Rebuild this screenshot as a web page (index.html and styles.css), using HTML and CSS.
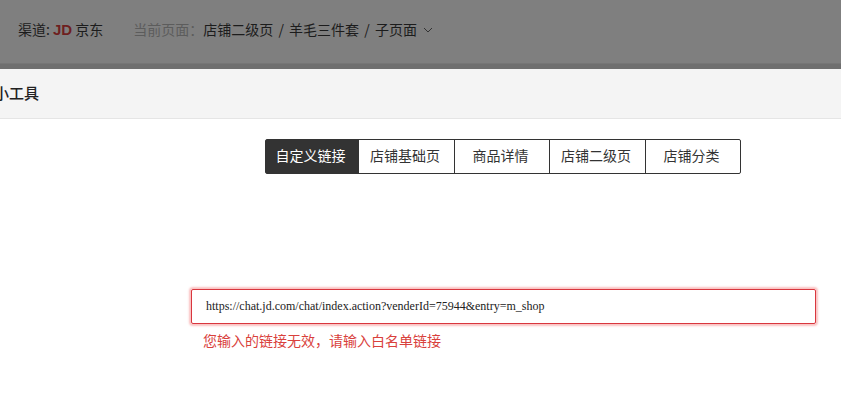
FILE: index.html
```html
<!DOCTYPE html>
<html lang="zh-CN">
<head>
    <meta charset="UTF-8">
    <title>小工具</title>
    <link rel="stylesheet" href="styles.css">
</head>
<body>
    <div class="topbar">
        <span class="channel">渠道: <b class="jd">JD</b> 京东</span>
        <span class="crumbs">
            <span class="crumbs-label">当前页面：</span>店铺二级页 / 羊毛三件套 / 子页面
            <svg class="chevron" width="10" height="6" viewBox="0 0 10 6"><path d="M1 1l4 4 4-4" fill="none" stroke="#333" stroke-width="1"/></svg>
        </span>
    </div>
    <div class="modal">
        <div class="modal-head">小工具</div>
        <div class="tabs">
            <div class="tab tab-active tab-1">自定义链接</div>
            <div class="tab tab-2">店铺基础页</div>
            <div class="tab tab-3">商品详情</div>
            <div class="tab tab-4">店铺二级页</div>
            <div class="tab tab-5">店铺分类</div>
        </div>
        <div class="link-form">
            <div class="link-input">https://chat.jd.com/chat/index.action?venderId=75944&amp;entry=m_shop</div>
            <div class="link-error">您输入的链接无效，请输入白名单链接</div>
        </div>
    </div>
</body>
</html>
```

FILE: styles.css
```css
html, body {
    margin: 0;
    padding: 0;
    height: 100%;
    overflow: hidden;
    background: #fff;
    font-family: "Noto Sans CJK SC", "Liberation Sans", sans-serif;
    color: #333;
}

/* dimmed page behind the dialog */
.topbar {
    display: flex;
    align-items: center;
    height: 64px;
    padding: 0 0 5px 18px;
    box-sizing: border-box;
    background: #7f7f7f;
    border-bottom: 1px solid #767676;
    box-shadow: 0 5px 0 #6f6f6f;
    margin-bottom: 5px;
    font-size: 14px;
    font-weight: 400;
    color: #1c1c1c;
}

.channel {
    margin-right: 30px;
}

.jd {
    color: #6e1f1f;
    font-family: "Liberation Sans", sans-serif;
    font-size: 15px;
}

.crumbs {
    font-size: 14px;
    word-spacing: 2px;
}

.crumbs-label {
    color: #5c5c5c;
}

.chevron {
    margin-left: 1px;
    vertical-align: 2px;
}

.modal-head {
    height: 49px;
    line-height: 47px;
    margin-left: -6px;
    background: #f4f4f4;
    border-bottom: 1px solid #e5e5e5;
    font-size: 15px;
    font-weight: 500;
    color: #222;
}

.tabs {
    display: flex;
    margin: 20px 0 0 265px;
    width: 476px;
    height: 35px;
    box-sizing: border-box;
    border: 1px solid #333;
    border-radius: 2px;
}

.tab {
    display: flex;
    align-items: center;
    justify-content: center;
    box-sizing: border-box;
    padding: 0 3px 4px 0;
    border-left: 1px solid #333;
    font-size: 14px;
    color: #333;
}

.tab-active {
    background: #333;
    color: #fff;
    border-left: 0;
}

.tab-1 { width: 92px; }
.tab-2 { width: 96px; }
.tab-3 { width: 95px; }
.tab-4 { width: 96px; }
.tab-5 { flex: 1; }

.link-form {
    margin: 115px 25px 0 191px;
}

.link-input {
    height: 35px;
    line-height: 33px;
    box-sizing: border-box;
    padding-left: 14px;
    border: 1px solid #d9363e;
    border-radius: 2px;
    box-shadow: 0 0 2px 2px rgba(245, 120, 120, 0.45);
    font-family: "Liberation Serif", serif;
    font-size: 12px;
    color: #222;
}

.link-error {
    margin: 6px 0 0 12px;
    font-size: 14px;
    line-height: 20px;
    color: #d9413c;
}
```
